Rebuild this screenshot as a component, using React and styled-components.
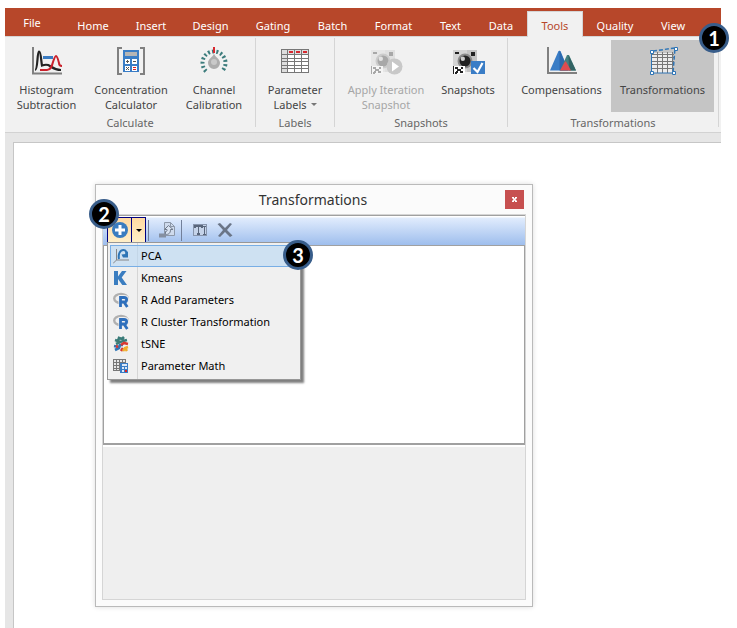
import { useState } from 'react';
import styled, { createGlobalStyle, css } from 'styled-components';

const GlobalStyle = createGlobalStyle`
  * {
    box-sizing: border-box;
  }
  body {
    margin: 0;
    background: #ffffff;
    font-family: 'Noto Sans', 'Open Sans', sans-serif;
    font-size: 11px;
    color: #444444;
  }
  button {
    font: inherit;
    color: inherit;
    border: none;
    margin: 0;
    padding: 0;
    background: none;
  }
  svg {
    display: block;
    flex: none;
  }
`;

const Page = styled.div`
  display: flex;
  flex-direction: column;
  min-height: 100vh;
  padding: 8px 16px 0 5px;
`;

const Header = styled.header`
  position: relative;
`;

const TabBar = styled.nav`
  display: flex;
  align-items: flex-end;
  height: 29px;
  background: #b7472a;
  border-bottom: 1px solid #d5d5d5;
`;

const Tab = styled.button`
  width: ${(props) => props.$width}px;
  height: 26px;
  margin-bottom: -1px;
  padding-top: 3px;
  line-height: 22px;
  color: #ffffff;
  white-space: nowrap;
  ${(props) =>
    props.$active &&
    css`
      color: #b7472a;
      background: #f1f1f1;
      border: 1px solid #d5d5d5;
      border-bottom: none;
      line-height: 20px;
    `}
`;

const FileTab = styled(Tab)`
  height: 28px;
  margin-right: 4px;
  padding: 0;
  line-height: 26px;
`;

const Ribbon = styled.div`
  display: flex;
  height: 96px;
  padding: 1px 0 5px;
  background: #f1f1f1;
  border-bottom: 1px solid #d2d2d2;
`;

const Group = styled.section`
  display: flex;
  flex-direction: column;
  width: ${(props) => props.$width}px;
  flex: none;
  padding-top: 2px;
  border-right: 1px solid #d5d5d5;
`;

const GroupButtons = styled.div`
  display: flex;
  padding: 0 4px;
`;

const GroupLabel = styled.div`
  margin-top: 2px;
  line-height: 18px;
  text-align: center;
  color: #666666;
`;

const RibbonButton = styled.button`
  display: flex;
  flex-direction: column;
  align-items: center;
  gap: 4px;
  width: ${(props) => props.$width}px;
  height: 72px;
  padding-top: 6px;
  line-height: 15px;
  white-space: nowrap;
  background: ${(props) => (props.$pressed ? '#c5c5c5' : 'transparent')};
  &:disabled {
    color: #a6a6a6;
  }
`;

const Arrow = styled.span`
  display: inline-block;
  margin-left: 4px;
  vertical-align: 3px;
  border: 3px solid transparent;
  border-top-color: #777777;
  border-bottom: none;
`;

const Workspace = styled.main`
  display: flex;
  flex: 1;
  padding: 9px 0 0 8px;
  background: #e6e6e6;
`;

const Sheet = styled.div`
  flex: 1;
  padding: 41px 0 21px 81px;
  background: #ffffff;
  border-top: 1px solid #c6c6c6;
  border-left: 1px solid #c6c6c6;
`;

const Dialog = styled.section`
  width: 438px;
  max-width: 100%;
  padding: 0 6px 6px;
  background: #fbfbfb;
  border: 1px solid #bababa;
  box-shadow: 0 0 5px rgba(0, 0, 0, 0.14);
`;

const TitleBar = styled.div`
  display: grid;
  grid-template-columns: 19px 1fr 19px;
  align-items: center;
  height: 29px;
  padding-right: 2px;
`;

const Title = styled.h1`
  grid-column: 2;
  margin: 0;
  font-size: 14px;
  font-weight: 400;
  line-height: 20px;
  text-align: center;
  color: #333333;
`;

const CloseButton = styled.button`
  display: grid;
  place-items: center;
  width: 19px;
  height: 19px;
  background: #c75050;
`;

const Frame = styled.div`
  border: 1px solid #d5d5d5;
`;

const Panel = styled.div`
  position: relative;
  border-top: 1px solid #a0a0a0;
`;

const Toolbar = styled.div`
  display: flex;
  align-items: center;
  height: 29px;
  padding: 1px 0 2px 4px;
  background: linear-gradient(#ffffff 1px, #e1ecfd 2px, #9ebeed);
`;

const SplitButton = styled.div`
  display: flex;
  height: 26px;
  border: 1px solid #000080;
  background: linear-gradient(#ffd9a1, #ffefc8);
`;

const SplitPart = styled.button`
  display: grid;
  place-items: center;
  width: ${(props) => props.$width}px;
  & + & {
    border-left: 1px solid #000080;
  }
`;

const SmallArrow = styled(Arrow)`
  margin: 0;
  border-top-color: #000000;
`;

const Separator = styled.span`
  width: 1px;
  height: 21px;
  margin: 0 5px 0 2px;
  background: #72809a;
`;

const ToolButton = styled.button`
  display: grid;
  place-items: center;
  width: 25px;
  height: 24px;
`;

const List = styled.div`
  height: 200px;
  background: #ffffff;
  border: 1px solid #a0a0a0;
  border-bottom-width: 2px;
`;

const Details = styled.div`
  height: 154px;
  border-top: 2px solid #ffffff;
  background: #efefef;
`;

const Menu = styled.div`
  position: absolute;
  top: 26px;
  left: 4px;
  width: 194px;
  padding: 2px;
  background: linear-gradient(#d5d5d5, #d5d5d5) 29px 0 / 1px 100% no-repeat #f0f0f0;
  border: 1px solid #979797;
  box-shadow: 3px 3px 2px rgba(0, 0, 0, 0.5);
`;

const MenuItem = styled.button`
  display: grid;
  grid-template-columns: 20px 1fr;
  align-items: center;
  gap: 8px;
  width: 100%;
  height: 22px;
  padding-left: 2px;
  line-height: 16px;
  text-align: left;
  color: #000000;
  border: 1px solid transparent;
  ${(props) =>
    props.$active &&
    css`
      background: rgba(184, 215, 243, 0.6);
      border-color: #78aee5;
    `}
`;

const Step = styled.span`
  position: absolute;
  top: ${(props) => props.$top}px;
  left: ${(props) => props.$left};
  right: ${(props) => props.$right};
  width: 30px;
  height: 30px;
  border: 3px solid #385d8a;
  border-radius: 50%;
  background: #000000;
  color: #ffffff;
  font-family: Lato, sans-serif;
  font-size: 20px;
  font-weight: 700;
  line-height: 24px;
  text-align: center;
`;

const HistogramIcon = () => (
  <svg width="32" height="32" viewBox="0 0 32 32" fill="none">
    <path d="M2 1v26.500H31" stroke="#808080" strokeWidth="2" />
    <path d="M12 10h10v3H12z" fill="#3a7cc2" />
    <path d="M4 24c3 0 2-18 4-18.500 2 0 2 9 3 14 3-1 6-1 8 .5 3 2 5 4 11 4" stroke="#222" strokeWidth="2.200" />
    <path d="M9 24h7c4 0 5-4 6-8 1-3 2-6 3-6s2 3 3 7c0 2 1 3 3 3" stroke="#c9202b" strokeWidth="2" />
  </svg>
);

const CalculatorIcon = () => (
  <svg width="32" height="32" viewBox="0 0 32 32" fill="none">
    <path d="M7 2H3v26h4M25 2h4v26h-4" stroke="#808080" strokeWidth="2" />
    <path d="M8 4h16v22H8z" fill="#3a7dc6" />
    <path d="M10 6h12v4H10z" fill="#b5b5b5" />
    <path d="M10 13h5v5h-5zM17 13h5v5h-5zM10 20h5v5h-5zM17 20h5v5h-5z" fill="#fff" />
    <path d="M11 15.500h3M12.500 14v3M18 15.500h3M11 21l3 3M14 21l-3 3" stroke="#555" />
    <path d="M18 21.500h3M18 23.500h3" stroke="#d22" />
  </svg>
);

const CalibrationIcon = () => (
  <svg width="32" height="32" viewBox="0 0 32 32" fill="none">
    <path
      d="M8 25.200A11.500 11.500 0 1 1 24 25.200"
      stroke="#3c7c7c"
      strokeWidth="4"
      strokeDasharray="2 2.200"
    />
    <path d="M16 1v6" stroke="#d7282f" strokeWidth="2" />
    <path d="M16 7.500c1 4 6 5 6 9.500a6 6 0 0 1-12 0c0-4.500 5-5.500 6-9.500z" fill="#adadad" />
    <circle cx="16" cy="16" r="3" fill="#c9c9c9" />
  </svg>
);

const LabelsIcon = () => (
  <svg width="32" height="32" viewBox="0 0 32 32" fill="none" shapeRendering="crispEdges">
    <path d="M2 3h28v24H2z" fill="#fff" />
    <path d="M2 3h28v5H2zM2 3h6v24H2z" fill="#dedede" />
    <path d="M10 5h4v2h-4zM17 5h4v2h-4zM24 5h4v2h-4z" fill="#d7282f" />
    <path
      d="M2.500 3.500h27v23h-27zM8.500 3v24M15.500 3v24M22.500 3v24M2 8.500h28M2 12.500h28M2 15.500h28M2 19.500h28M2 22.500h28"
      stroke="#777"
    />
  </svg>
);

const Camera = () => (
  <>
    <path d="M2 4h24v22H2z" fill="#d3d3d3" />
    <path d="M16 4h10v22H16z" fill="#c3c3c3" />
    <path d="M4 6h4v2H4zM20 6h4v4h-4z" fill="#222" />
    <circle cx="14" cy="15" r="7.500" fill="#8a8a8a" />
    <circle cx="14" cy="15" r="5.500" fill="#222" />
    <circle cx="11.800" cy="12.800" r="2.200" fill="#ccc" />
    <path d="M2 20h12v8H2z" fill="#fff" />
    <path d="M2 20h1v8H2zM4 26h2v2H4zM4 21h3v2H4zM10 21h2v2h-2zM6 23h4v2H6zM9 25h3v2H9zM5 25h2v2H5z" fill="#222" />
  </>
);

const ApplySnapshotIcon = () => (
  <svg width="34" height="32" viewBox="0 0 34 32">
    <g opacity="0.35">
      <Camera />
    </g>
    <circle cx="25.500" cy="20.500" r="8" fill="#c8c8c8" />
    <path d="M23 15.500l7 5-7 5z" fill="#fff" />
  </svg>
);

const SnapshotsIcon = () => (
  <svg width="34" height="32" viewBox="0 0 34 32" fill="none">
    <Camera />
    <path d="M20 15h14v13H20z" fill="#3a7dc6" />
    <path d="M22.500 22l4 4 5-9" stroke="#fff" strokeWidth="2.200" />
  </svg>
);

const CompensationsIcon = () => (
  <svg width="32" height="32" viewBox="0 0 32 32">
    <path d="M4 24.500L12.500 5h2l8 19.500z" fill="#3a7dc6" />
    <path d="M13.500 4l9 20.500h-9z" fill="#2c69ad" />
    <path d="M14 24.500L21 9h2l7 15.500z" fill="#438080" />
    <path d="M22.500 9l7.500 15.500h-7z" fill="#326363" />
    <path d="M14 24.500l5-9h1l5 9z" fill="#dd4b50" />
    <path d="M1 1h2v25h28v2H1z" fill="#808080" />
  </svg>
);

const TransformationsIcon = () => (
  <svg width="32" height="32" viewBox="0 0 32 32" fill="none">
    <path d="M4 7h22v20H4z" fill="#ececec" />
    <path
      d="M4 8.500h23M4 11.500h23M4 15.500h23M4 18.500h23M4 22.500h23M10.500 6v21M15.500 6v21M20.500 6v21M25.500 6v21"
      stroke="#777"
    />
    <path d="M4.500 6v21H26" stroke="#2e75b6" />
    <path d="M6 5l22-3-2 25" stroke="#2e75b6" strokeWidth="1.500" strokeDasharray="4 2" />
    <path d="M3.500 4.500h3v3h-3zM27.500 1.500h3v3h-3zM3.500 25.500h3v3h-3zM25.500 25.500h3v3h-3z" fill="#fff" stroke="#2e75b6" />
  </svg>
);

const AddIcon = () => (
  <svg width="18" height="18" viewBox="0 0 18 18">
    <circle cx="9" cy="9" r="8" fill="#3a7dc0" />
    <path d="M7.500 4h3v3.500H14v3h-3.500V14h-3v-3.500H4v-3h3.500z" fill="#fff" />
  </svg>
);

const ApplyIcon = () => (
  <svg width="16" height="16" viewBox="0 0 16 16" fill="none" stroke="#8d98a9">
    <path d="M5.500.5h6l4 4v9h-10z" fill="#cfdbed" />
    <path d="M11.500.5v4h4" />
    <path d="M9.500 3.500l4.500 4h-2.500c0 4-2 5-5 5v-3c2 0 1.500-1 1.500-2H5.500z" fill="#d9e3f2" stroke="#6f7a8b" />
    <path d="M0 11.500h7v4H0z" fill="#8590a2" stroke="none" />
  </svg>
);

const RenameIcon = () => (
  <svg width="16" height="16" viewBox="0 0 16 16" fill="none" shapeRendering="crispEdges">
    <path d="M1.500 2.500h13v11h-13z" fill="#c5d3e9" stroke="#8795ad" />
    <path d="M3 6V4h7v2M6.500 4v8M5 12h3" stroke="#59667c" strokeWidth="1.500" />
    <path d="M11 4h3M12.500 4v8M11 12h3" stroke="#59667c" />
  </svg>
);

const DeleteIcon = () => (
  <svg width="16" height="16" viewBox="0 0 16 16">
    <path d="M.5 2L3 1l5 5 5-5 2 1-5 6 5.500 5.500L13 15l-5-5-5 5-2-1 5-6z" fill="#6a7587" />
  </svg>
);

const PcaIcon = () => (
  <svg width="16" height="16" viewBox="0 0 16 16" fill="none">
    <path d="M3.500 1v11H16M3.500 12L0 15.500" stroke="#868686" />
    <path d="M6 11c-1-5 1-9 4.500-9C13 2 13.500 4 13 6" stroke="#2e75b6" strokeWidth="2" />
    <path d="M8.500 6.500l1.500 3h5V3l-2.500 3z" fill="#2e75b6" />
  </svg>
);

const KmeansIcon = () => (
  <svg width="16" height="16" viewBox="0 0 16 16">
    <path d="M1 1h4v5.500L9 1h4.500L8.700 7.500 14 15H9.300L5 9v6H1z" fill="#3a7dc0" />
  </svg>
);

const RIcon = () => (
  <svg width="16" height="16" viewBox="0 0 16 16" fill="none">
    <ellipse cx="8" cy="6.500" rx="6.800" ry="4.500" stroke="#b0b0b0" strokeWidth="2.400" />
    <path d="M7.500 15V5H11c4 0 3.500 4.500.7 5l3.300 5" stroke="#efefef" strokeWidth="4" />
    <path d="M7.500 15V5.500H11c3.500 0 3.500 4.500 0 4.500H8M11 10l3.300 5" stroke="#2e6fbc" strokeWidth="2.800" />
  </svg>
);

const TsneIcon = () => (
  <svg width="16" height="16" viewBox="0 0 16 16" fill="none" strokeWidth="2.600">
    <path d="M2 4l3 1 1-3 3 1 2-2M3 8l4-2 3-1 4-1M9 3l1 3" stroke="#397b78" />
    <path d="M2 14l4-2 1-3 3 0M1 10l5 1" stroke="#2e75b6" />
    <path d="M8 9l3-2 4 1M3 11l2-1M10 12l-2 3" stroke="#d93831" />
    <path d="M10 15l2-3 3-1M12 12l2 3" stroke="#f1ad2d" />
  </svg>
);

const MathIcon = () => (
  <svg width="16" height="16" viewBox="0 0 16 16" fill="none" shapeRendering="crispEdges">
    <path d="M0 1h13v12H0z" fill="#e6e6e6" />
    <path d="M.5 1v12M3.500 1v12M6.500 1v12M9.500 1v12M12.500 1v12M0 1.500h13M0 4.500h13M0 7.500h13M0 10.500h13M0 12.500h13" stroke="#777" />
    <path d="M7 5h8v10H7z" fill="#3a7dc6" />
    <path d="M9 6h5v2H9zM9 9h2v2H9zM12 9h2v2h-2zM9 12h2v2H9z" fill="#dce8f6" />
    <path d="M12 12h2v2h-2z" fill="#d22" />
  </svg>
);

const CloseIcon = () => (
  <svg width="7" height="7" viewBox="0 0 7 7" fill="none">
    <path d="M1.500 1.500l4 4M5.500 1.500l-4 4" stroke="#fff" strokeWidth="1.500" />
    <path d="M1 1.500h2M4 1.500h2M1 5.500h2M4 5.500h2" stroke="#fff" />
  </svg>
);

const tabs = [
  { name: 'Home', width: 60 },
  { name: 'Insert', width: 56 },
  { name: 'Design', width: 63 },
  { name: 'Gating', width: 62 },
  { name: 'Batch', width: 57 },
  { name: 'Format', width: 65 },
  { name: 'Text', width: 49 },
  { name: 'Data', width: 52 },
  { name: 'Tools', width: 56 },
  { name: 'Quality', width: 64 },
  { name: 'View', width: 52 },
];

const menuItems = [
  { name: 'PCA', Icon: PcaIcon },
  { name: 'Kmeans', Icon: KmeansIcon },
  { name: 'R Add Parameters', Icon: RIcon },
  { name: 'R Cluster Transformation', Icon: RIcon },
  { name: 'tSNE', Icon: TsneIcon },
  { name: 'Parameter Math', Icon: MathIcon },
];

const App = () => {
  const [activeTab, setActiveTab] = useState('Tools');
  const [menuOpen, setMenuOpen] = useState(true);
  const [activeItem, setActiveItem] = useState('PCA');

  return (
    <>
      <GlobalStyle />
      <Page>
        <Header>
          <TabBar>
            <FileTab $width={54}>File</FileTab>
            {tabs.map((tab) => (
              <Tab
                key={tab.name}
                $width={tab.width}
                $active={tab.name === activeTab}
                onClick={() => setActiveTab(tab.name)}
              >
                {tab.name}
              </Tab>
            ))}
          </TabBar>
          <Ribbon>
            <Group $width={251}>
              <GroupButtons>
                <RibbonButton $width={75}>
                  <HistogramIcon />
                  <span>Histogram<br />Subtraction</span>
                </RibbonButton>
                <RibbonButton $width={94}>
                  <CalculatorIcon />
                  <span>Concentration<br />Calculator</span>
                </RibbonButton>
                <RibbonButton $width={72}>
                  <CalibrationIcon />
                  <span>Channel<br />Calibration</span>
                </RibbonButton>
              </GroupButtons>
              <GroupLabel>Calculate</GroupLabel>
            </Group>
            <Group $width={79}>
              <GroupButtons>
                <RibbonButton $width={70}>
                  <LabelsIcon />
                  <span>Parameter<br />Labels<Arrow /></span>
                </RibbonButton>
              </GroupButtons>
              <GroupLabel>Labels</GroupLabel>
            </Group>
            <Group $width={173}>
              <GroupButtons>
                <RibbonButton $width={94} disabled>
                  <ApplySnapshotIcon />
                  <span>Apply Iteration<br />Snapshot</span>
                </RibbonButton>
                <RibbonButton $width={70}>
                  <SnapshotsIcon />
                  <span>Snapshots</span>
                </RibbonButton>
              </GroupButtons>
              <GroupLabel>Snapshots</GroupLabel>
            </Group>
            <Group $width={211}>
              <GroupButtons>
                <RibbonButton $width={99}>
                  <CompensationsIcon />
                  <span>Compensations</span>
                </RibbonButton>
                <RibbonButton $width={103} $pressed>
                  <TransformationsIcon />
                  <span>Transformations</span>
                </RibbonButton>
              </GroupButtons>
              <GroupLabel>Transformations</GroupLabel>
            </Group>
          </Ribbon>
          <Step $top={15} $right="-8px">1</Step>
        </Header>

        <Workspace>
          <Sheet>
            <Dialog>
              <TitleBar>
                <Title>Transformations</Title>
                <CloseButton aria-label="Close"><CloseIcon /></CloseButton>
              </TitleBar>
              <Frame>
                <Panel>
                  <Toolbar>
                    <SplitButton>
                      <SplitPart $width={23} aria-label="Add"><AddIcon /></SplitPart>
                      <SplitPart $width={14} aria-label="Add menu" onClick={() => setMenuOpen(!menuOpen)}>
                        <SmallArrow />
                      </SplitPart>
                    </SplitButton>
                    <Separator />
                    <ToolButton aria-label="Apply"><ApplyIcon /></ToolButton>
                    <Separator />
                    <ToolButton aria-label="Rename"><RenameIcon /></ToolButton>
                    <ToolButton aria-label="Delete"><DeleteIcon /></ToolButton>
                  </Toolbar>
                  <List />
                  {menuOpen && (
                    <Menu role="menu">
                      {menuItems.map(({ name, Icon }) => (
                        <MenuItem
                          key={name}
                          role="menuitem"
                          $active={name === activeItem}
                          onMouseEnter={() => setActiveItem(name)}
                        >
                          <Icon />
                          {name}
                        </MenuItem>
                      ))}
                    </Menu>
                  )}
                  <Step $top={-17} $left="-14px">2</Step>
                  <Step $top={24} $left="180px">3</Step>
                </Panel>
                <Details />
              </Frame>
            </Dialog>
          </Sheet>
        </Workspace>
      </Page>
    </>
  );
};

export default App;
